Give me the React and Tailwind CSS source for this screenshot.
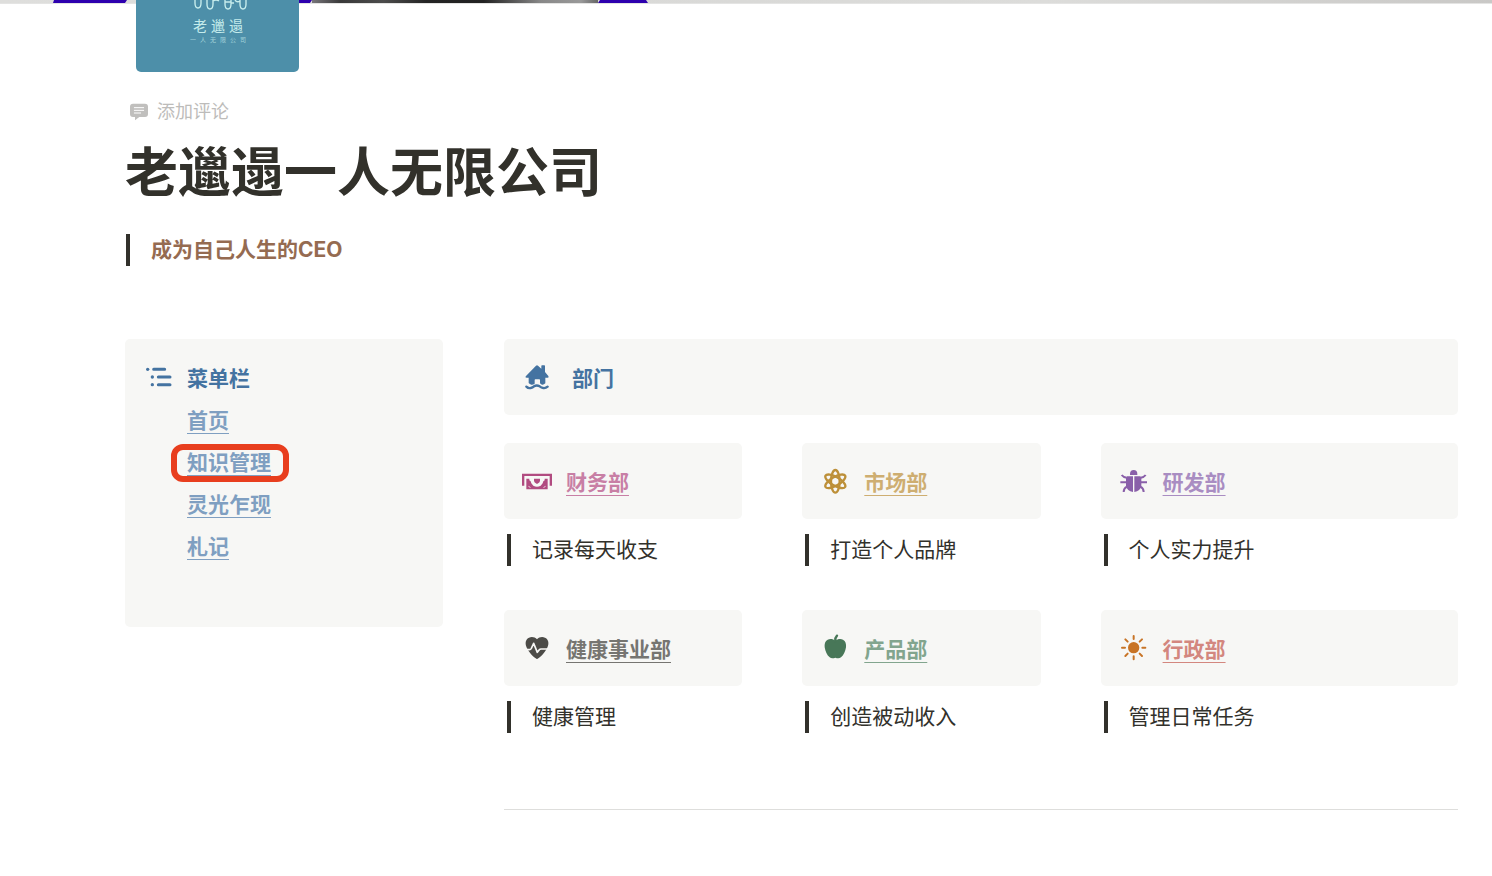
const ListIcon = () => (
    <svg viewBox="0 0 96 96" className="size-8 shrink-0 text-[#4473a1]" fill="currentColor" aria-hidden="true">
        <circle cx="17" cy="25" r="5" />
        <circle cx="31" cy="48" r="5" />
        <circle cx="31" cy="71" r="5" />
        <path d="M35 25h33M49 48h35M49 71h35" stroke="currentColor" strokeWidth="9" strokeLinecap="round" />
    </svg>
);

const HouseIcon = () => (
    <svg viewBox="0 0 96 96" className="size-8 shrink-0 text-[#4473a1]" fill="currentColor" aria-hidden="true">
        <path d="M45 14q3-3 6 0l10 9v-8q0-2 2-2h7q2 0 2 2v18l10 12q3 5-2 5h-7v17q-5 5-10 4-4-1-6-4V57q0-2-2-2H43q-2 0-2 2v11q-5 4-10 3-5-1-8-5V50h-6q-6 0-2-5z" />
        <path d="M16 77q6 6 13 4 6-1 10-5 8-5 17 0 5 4 11 5 7 1 13-4" fill="none" stroke="currentColor" strokeWidth="7" strokeLinecap="round" />
    </svg>
);

const MoneyIcon = () => (
    <svg viewBox="0 0 96 96" className="size-8 shrink-0 text-[#b14b80]" fill="currentColor" aria-hidden="true">
        <path d="M3 26h90v36h-7V33H10v29H3z" />
        <path d="M16 41h9v5q5 2 6 9l6 7q11 6 22 0l6-7q1-7 6-9v-5h9v32H16z" />
        <path d="M39 41h18v7q0 4-9 9-9-5-9-9z" />
        <path d="M22 64q5 0 6 5M74 64q-5 0-6 5" fill="none" stroke="#f7f7f5" strokeWidth="2" />
    </svg>
);

const AtomIcon = () => (
    <svg viewBox="0 0 96 96" className="size-8 shrink-0 text-[#bd9039]" fill="none" stroke="currentColor" strokeWidth="7" aria-hidden="true">
        <ellipse cx="49" cy="49" rx="13" ry="34" />
        <ellipse cx="49" cy="49" rx="13" ry="34" transform="rotate(60 49 49)" />
        <ellipse cx="49" cy="49" rx="13" ry="34" transform="rotate(120 49 49)" />
    </svg>
);

const BugIcon = () => (
    <svg viewBox="0 0 96 96" className="size-8 shrink-0 text-[#895fa9]" fill="currentColor" aria-hidden="true">
        <path d="M36 30V27a11 12 0 0 1 22 0v3z" />
        <path d="M27 34h18v47q-18-3-21-18V38zM67 34H49v47q18-3 21-18V38z" />
        <path d="M11 30q5 7 15 8M7 52h18M17 81q0-11 10-16M83 30q-5 7-15 8M87 52H69M77 81q0-11-10-16" fill="none" stroke="currentColor" strokeWidth="6" />
    </svg>
);

const HeartIcon = () => (
    <svg viewBox="0 0 96 96" className="size-8 shrink-0 text-[#4c4b47]" fill="currentColor" aria-hidden="true">
        <path d="M48 22C54 15 64 13 72 17c9 4 12 14 9 24-4 14-18 30-29 38q-4 4-8 0C33 71 19 55 15 41c-3-10 0-20 9-24 8-4 18-2 24 5z" />
        <path d="M12 53h13q4 0 6-4l7-15 11 27 6-8q2-2 5-2h25" fill="none" stroke="#f7f7f5" strokeWidth="5" strokeLinejoin="round" />
    </svg>
);

const AppleIcon = () => (
    <svg viewBox="0 0 96 96" className="size-8 shrink-0 text-[#487758]" fill="currentColor" aria-hidden="true">
        <path d="M49 26c6-5 16-7 23-3 8 4 10 13 9 23-2 13-7 24-15 30-5 4-11 3-17 1-6 2-12 3-17-1-8-6-13-17-15-30-1-10 1-19 9-23 7-4 17-2 23 3z" />
        <path d="M49 27q-1-10 5-16" fill="none" stroke="currentColor" strokeWidth="7" strokeLinecap="round" />
    </svg>
);

const SunIcon = () => (
    <svg viewBox="0 0 96 96" className="size-8 shrink-0 text-[#c87426]" fill="currentColor" aria-hidden="true">
        <circle cx="47" cy="47" r="17" />
        <path d="M47 12v9M47 73v9M12 47h9M73 47h9M22 22l7 7M65 65l7 7M22 72l7-7M65 29l7-7" stroke="currentColor" strokeWidth="6" strokeLinecap="round" />
    </svg>
);

const CommentIcon = () => (
    <svg viewBox="0 0 54 54" className="size-[18px] shrink-0" aria-hidden="true">
        <path d="M9 2h36q9 0 9 9v22q0 9-9 9H28L15 52V42H9q-9 0-9-9V11q0-9 9-9z" fill="#c0bfbd" />
        <path d="M13 14h28M13 22h28M13 30h19" stroke="#fff" strokeWidth="3" strokeLinecap="round" />
    </svg>
);

const Cover = () => (
    <svg viewBox="0 0 1492 4" preserveAspectRatio="none" className="block h-1 w-full" aria-hidden="true">
        <defs>
            <linearGradient id="wall">
                <stop offset="0" stopColor="#dededc" />
                <stop offset="0.5" stopColor="#d9d9d7" />
                <stop offset="0.7" stopColor="#dcdcda" />
                <stop offset="1" stopColor="#c9c8c6" />
            </linearGradient>
            <linearGradient id="shade">
                <stop offset="0" stopColor="#77757a" />
                <stop offset="0.1" stopColor="#393939" />
                <stop offset="0.25" stopColor="#4c4c4c" />
                <stop offset="0.4" stopColor="#242424" />
                <stop offset="0.6" stopColor="#222" />
                <stop offset="0.8" stopColor="#888" />
                <stop offset="0.94" stopColor="#999" />
                <stop offset="1" stopColor="#666" />
            </linearGradient>
        </defs>
        <path d="M0 0h1492v3H0z" fill="url(#wall)" />
        <path d="M312 0h286v3H312z" fill="url(#shade)" />
        <path d="M54 0h73l-2 3H53zM299 0h13l-2 3h-11zM600 0h46l2 3h-50z" fill="#2d00ae" />
        <path d="M0 3h1492v1H0z" fill="#e4e4e3" />
    </svg>
);

const Logo = () => (
    <svg viewBox="0 0 163 72" className="relative -mt-1 ml-[11px] block h-[72px] w-[163px] rounded-b-[5px] bg-[#4d8fa9]" role="img" aria-label="老邋遢">
        <path
            d="M59 0v3q0 5 3 5t3-5V0M71 0v4q0 5 3 5t3-5V0M77 1q3-2 6 0M89 0v4q0 5 3 5t3-5V0M89 2h6M95 3h3M104 0v4q0 5 3 5t3-5V0M99 0q2 3 5 1"
            fill="none"
            stroke="#c5ecec"
            strokeWidth="1.4"
        />
        <text x="64 82 100" y="31" fontSize="14" textAnchor="middle" fill="#c5ecec">老邋遢</text>
        <text x="57 67 77 87 97 107" y="42" fontSize="6" textAnchor="middle" fill="#a3d3db">一人无限公司</text>
    </svg>
);

const menu = [
    { name: "首页" },
    { name: "知识管理", marked: true },
    { name: "灵光乍现" },
    { name: "札记" },
];

const departments = [
    { name: "财务部", note: "记录每天收支", icon: MoneyIcon, color: "text-[#c87fa5]" },
    { name: "市场部", note: "打造个人品牌", icon: AtomIcon, color: "text-[#ceae71]" },
    { name: "研发部", note: "个人实力提升", icon: BugIcon, color: "text-[#a98dc2]" },
    { name: "健康事业部", note: "健康管理", icon: HeartIcon, color: "text-[#767571]" },
    { name: "产品部", note: "创造被动收入", icon: AppleIcon, color: "text-[#82a58e]" },
    { name: "行政部", note: "管理日常任务", icon: SunIcon, color: "text-[#d3877f]" },
];

const linkStyle = "font-bold underline decoration-1 underline-offset-5";

const App = () => {
    return (
        <div className="bg-white pb-16 text-[21px] leading-8 text-[#32312b] font-['Inter','Noto_Sans_CJK_SC',sans-serif]">
            <Cover />
            <div className="pl-[125px] pr-[34px]">
                <Logo />
                <button type="button" className="mt-6 ml-[5px] flex items-center gap-[9px] text-[18px] text-[#bdbcba]">
                    <CommentIcon />
                    添加评论
                </button>
                <h1 className="mt-[9px] text-[53px] leading-[72px] font-bold">老邋遢一人无限公司</h1>
                <blockquote className="mt-[25px] ml-px border-l-4 border-[#32312b] pl-[21px] font-bold text-[#956b51]">
                    成为自己人生的CEO
                </blockquote>

                <main className="mt-[73px] grid grid-cols-[1fr_3fr] items-start gap-[61px]">
                    <nav className="h-72 rounded-[5px] bg-[#f7f7f5] pt-5 pl-[17px]">
                        <div className="flex items-center gap-[13px]">
                            <ListIcon />
                            <h2 className="pt-1 font-bold text-[#4473a1]">菜单栏</h2>
                        </div>
                        <ul className="mt-[10px] pl-[45px]">
                            {menu.map((item) => (
                                <li key={item.name} className="h-[42px]">
                                    <span className="relative inline-block">
                                        <a href="#" className={`${linkStyle} text-[#7f9fc1]`}>{item.name}</a>
                                        {item.marked && (
                                            <span className="pointer-events-none absolute -left-4 -right-[18px] -inset-y-[3px] rounded-xl border-6 border-[#e83e1e]" />
                                        )}
                                    </span>
                                </li>
                            ))}
                        </ul>
                    </nav>

                    <section>
                        <div className="flex h-[76px] items-center gap-[19px] rounded-[5px] bg-[#f7f7f5] pl-[17px]">
                            <HouseIcon />
                            <h2 className="pt-1 font-bold text-[#4473a1]">部门</h2>
                        </div>
                        <div className="mt-7 grid grid-cols-[2fr_2fr_3fr] gap-x-[60px] gap-y-11">
                            {departments.map(({ name, note, icon: Icon, color }) => (
                                <div key={name}>
                                    <div className="flex h-[76px] items-center gap-[13px] rounded-[5px] bg-[#f7f7f5] pl-[17px]">
                                        <Icon />
                                        <a href="#" className={`${linkStyle} pt-1 ${color}`}>{name}</a>
                                    </div>
                                    <blockquote className="mt-[15px] ml-[3px] border-l-4 border-[#32312b] pl-[21px]">
                                        {note}
                                    </blockquote>
                                </div>
                            ))}
                        </div>
                        <hr className="mt-[76px] border-[#dededc]" />
                    </section>
                </main>
            </div>
        </div>
    );
};

export default App;
